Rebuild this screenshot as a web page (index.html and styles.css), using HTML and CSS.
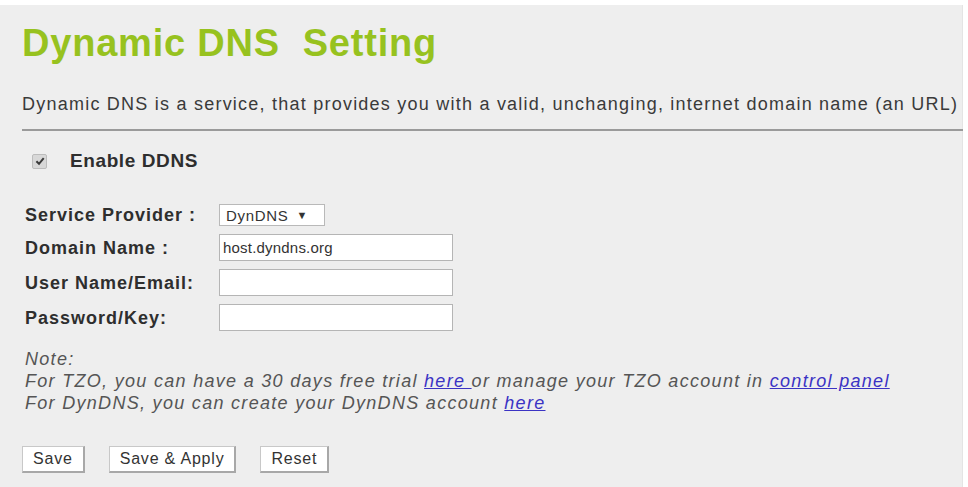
FILE: index.html
```html
<!DOCTYPE html>
<html lang="en">
<head>
<meta charset="utf-8">
<title>Dynamic DNS Setting</title>
<link rel="stylesheet" href="styles.css">
</head>
<body>
<div class="panel">
  <h1 class="title">Dynamic DNS&nbsp; Setting</h1>
  <p class="intro">Dynamic DNS is a service, that provides you with a valid, unchanging, internet domain name (an URL)</p>
  <hr class="rule">

  <label class="enable">
    <span class="check">
      <svg viewBox="0 0 12 12" width="12" height="12" aria-hidden="true">
        <path d="M2.4 6.3 L5 8.8 L9.7 3.2" fill="none" stroke="#3a3a3a" stroke-width="2"/>
      </svg>
    </span>
    <span class="enable-text">Enable DDNS</span>
  </label>

  <div class="form">
    <span class="lbl">Service Provider :</span>
    <div class="cell"><span class="select">DynDNS <span class="arrow">&#9660;</span></span></div>
    <span class="lbl">Domain Name :</span>
    <div class="cell"><span class="input">host.dyndns.org</span></div>
    <span class="lbl">User Name/Email:</span>
    <div class="cell"><span class="input"></span></div>
    <span class="lbl">Password/Key:</span>
    <div class="cell"><span class="input"></span></div>
  </div>

  <div class="note">
    <div>Note:</div>
    <div>For TZO, you can have a 30 days free trial <a href="#">here </a>or manage your TZO account in <a href="#">control panel</a></div>
    <div>For DynDNS, you can create your DynDNS account <a href="#">here</a></div>
  </div>

  <div class="buttons">
    <button class="btn" type="button">Save</button>
    <button class="btn" type="button">Save &amp; Apply</button>
    <button class="btn" type="button">Reset</button>
  </div>
</div>
</body>
</html>
```

FILE: styles.css
```css
html, body {
  margin: 0;
  padding: 0;
  background: #ffffff;
}

body {
  font-family: "Liberation Sans", Arial, sans-serif;
  color: #333;
  padding-top: 5px;
}

.panel {
  width: 963px;
  height: 482px;
  box-sizing: border-box;
  background: #eeeeee;
  border-right: 1px solid #e4e4e4;
  padding: 0 0 0 22px;
}

.title {
  margin: 0;
  padding-top: 16px;
  font-size: 38px;
  line-height: 44px;
  font-weight: bold;
  letter-spacing: 0.8px;
  color: #97c21f;
}

.intro {
  margin: 28px 0 0;
  font-size: 18px;
  line-height: 22px;
  letter-spacing: 1.23px;
  color: #3a3a3a;
  white-space: nowrap;
}

.rule {
  margin: 14px 0 0;
  width: 941px;
  border: 0;
  border-top: 2px solid #9a9a9a;
  height: 0;
}

.enable {
  display: flex;
  align-items: center;
  margin-top: 19px;
  padding-left: 10px;
  height: 22px;
}

.check {
  width: 13px;
  height: 13px;
  background: #d8d8d8;
  border: 1px solid #bcbcbc;
  border-radius: 2px;
  display: flex;
  align-items: center;
  justify-content: center;
}

.enable-text {
  margin-left: 23px;
  font-weight: bold;
  font-size: 19px;
  letter-spacing: 0.6px;
  color: #2e2e2e;
}

.form {
  display: grid;
  grid-template-columns: 194px 236px;
  row-gap: 8px;
  margin-top: 32px;
  padding-left: 3px;
  align-items: center;
}

.lbl {
  font-weight: bold;
  font-size: 18px;
  letter-spacing: 1px;
  color: #2e2e2e;
  line-height: 22px;
}

.cell {
  display: flex;
  align-items: center;
}

.select {
  display: inline-flex;
  align-items: center;
  box-sizing: border-box;
  width: 106px;
  height: 22px;
  padding: 0 0 0 6px;
  background: #fff;
  border: 1px solid #b9b9b9;
  font-size: 15px;
  letter-spacing: 0.7px;
  color: #333;
}

.arrow {
  font-size: 11px;
  margin-left: 8px;
}

.input {
  display: flex;
  align-items: center;
  box-sizing: border-box;
  width: 234px;
  height: 27px;
  padding-left: 3px;
  background: #fff;
  border: 1px solid #b5b5b5;
  font-size: 15px;
  letter-spacing: 0.2px;
  color: #333;
}

.note {
  margin-top: 17px;
  padding-left: 3px;
  font-style: italic;
  font-size: 18px;
  line-height: 22px;
  letter-spacing: 1.3px;
  color: #555;
}

.note a {
  color: #3b33c4;
  text-decoration: underline;
}

.buttons {
  display: flex;
  gap: 24px;
  margin-top: 32px;
}

.btn {
  height: 27px;
  padding: 0 10px;
  background: #ffffff;
  border: 1px solid #c8c8c8;
  border-right: 2px solid #a8a8a8;
  border-bottom: 2px solid #a8a8a8;
  font-family: "Liberation Sans", Arial, sans-serif;
  font-size: 16px;
  letter-spacing: 0.8px;
  color: #333;
}
```
